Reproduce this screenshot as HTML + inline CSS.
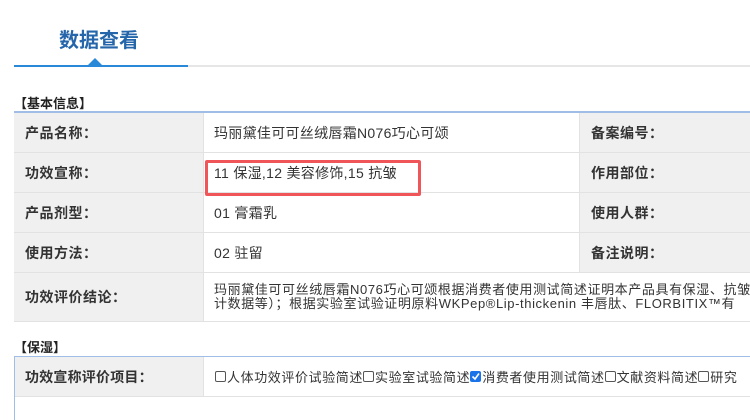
<!DOCTYPE html>
<html><head><meta charset="utf-8"><style>
*{margin:0;padding:0;box-sizing:border-box}
body{width:750px;height:420px;overflow:hidden;background:#fff;font-family:"Liberation Sans","Noto Sans CJK SC",sans-serif;color:#333;position:relative}
.a{position:absolute}
.lab{position:absolute;background:#f0f0f0;font-weight:bold;font-size:14px;letter-spacing:0.5px;color:#333;display:flex;align-items:center;padding-left:11px;border-bottom:1px solid #e2e2e2;white-space:nowrap}
.val{position:absolute;font-size:14px;letter-spacing:0.3px;display:flex;align-items:center;padding-left:10px;border-bottom:1px solid #e2e2e2;border-left:1px solid #e2e2e2;border-right:1px solid #e2e2e2;white-space:nowrap;overflow:hidden}
.cb{display:inline-block;width:11px;height:11px;border:1px solid #555;border-radius:2px;vertical-align:-1px;margin-right:1px}
.cbc{background:#1a73e8;border-color:#1a73e8;position:relative}
</style></head><body>
<div class="a" style="left:59px;top:24px;font-size:20px;font-weight:bold;color:#2566ab">数据查看</div>
<div class="a" style="left:14px;top:65px;width:736px;height:2px;background:#e6e6e6"></div>
<div class="a" style="left:14px;top:65px;width:174px;height:2px;background:#2a88d8"></div>
<div class="a" style="left:88px;top:58px;width:0;height:0;border-left:7px solid transparent;border-right:7px solid transparent;border-bottom:7px solid #2a88d8"></div>
<div class="a" style="left:14px;top:93px;font-size:13px;font-weight:bold;color:#222">【基本信息】</div>
<div class="a" style="left:14px;top:111px;width:736px;height:2px;background:#9fbde6"></div>
<div class="lab" style="left:14px;top:113px;width:189px;height:40px">产品名称：</div>
<div class="val" style="left:203px;top:113px;width:377px;height:40px">玛丽黛佳可可丝绒唇霜N076巧心可颂</div>
<div class="lab" style="left:580px;top:113px;width:170px;height:40px">备案编号：</div>
<div class="lab" style="left:14px;top:153px;width:189px;height:40px">功效宣称：</div>
<div class="val" style="left:203px;top:153px;width:377px;height:40px">11 保湿,12 美容修饰,15 抗皱</div>
<div class="lab" style="left:580px;top:153px;width:170px;height:40px">作用部位：</div>
<div class="lab" style="left:14px;top:193px;width:189px;height:40px">产品剂型：</div>
<div class="val" style="left:203px;top:193px;width:377px;height:40px">01 膏霜乳</div>
<div class="lab" style="left:580px;top:193px;width:170px;height:40px">使用人群：</div>
<div class="lab" style="left:14px;top:233px;width:189px;height:40px">使用方法：</div>
<div class="val" style="left:203px;top:233px;width:377px;height:40px">02 驻留</div>
<div class="lab" style="left:580px;top:233px;width:170px;height:40px">备注说明：</div>
<div class="lab" style="left:14px;top:273px;width:189px;height:49px">功效评价结论：</div>
<div class="val" style="left:203px;top:273px;width:547px;height:49px;border-right:none;font-size:13px;letter-spacing:0.6px;line-height:14px;align-items:flex-start;padding-top:10px;flex-direction:column">
<div>玛丽黛佳可可丝绒唇霜N076巧心可颂根据消费者使用测试简述证明本产品具有保湿、抗皱</div>
<div>计数据等）；根据实验室试验证明原料WKPep®Lip-thickenin 丰唇肽、FLORBITIX™有</div></div>
<div class="a" style="left:205px;top:160px;width:216px;height:36px;border:3px solid #f0555a;border-radius:2px"></div>
<div class="a" style="left:14px;top:337px;font-size:13px;font-weight:bold;color:#222">【保湿】</div>
<div class="a" style="left:14px;top:356px;width:736px;height:64px;border-top:1px solid #9fbde6;border-left:1px solid #9fbde6"></div>
<div class="lab" style="left:15px;top:357px;width:188px;height:40px;padding-left:10px;letter-spacing:0.2px">功效宣称评价项目：</div>
<div class="val" style="left:203px;top:357px;width:547px;height:40px;border-right:none;padding-left:11px;font-size:13px;letter-spacing:0.6px"><span class="cb"></span>人体功效评价试验简述<span class="cb"></span>实验室试验简述<span class="cb cbc"><svg width="9" height="9" style="position:absolute;left:0;top:0"><path d="M1.5 4.5L4 7L8 1.5" stroke="#fff" stroke-width="1.6" fill="none"/></svg></span>消费者使用测试简述<span class="cb"></span>文献资料简述<span class="cb"></span>研究</div>
</body></html>
